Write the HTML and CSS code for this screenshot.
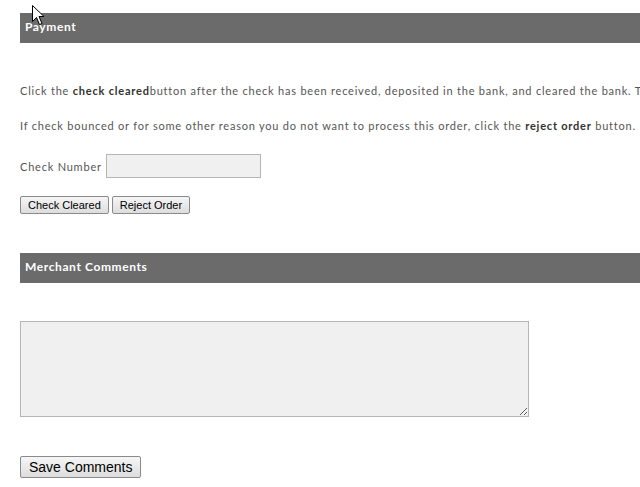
FILE: index.html
```html
<!DOCTYPE html>
<html>
<head>
<meta charset="utf-8">
<link rel="stylesheet" href="styles.css">
</head>
<body>
<div class="page">
  <section class="panel">
    <h2 class="bar">Payment</h2>
    <p class="txt first">Click the <b>check cleared</b>button after the check has been received, deposited in the bank, and cleared the bank. The order will then be processed.</p>
    <p class="txt">If check bounced or for some other reason you do not want to process this order, click the <b>reject order</b> button.</p>
    <div class="row txt">
      <label for="cn">Check Number</label>
      <input id="cn" class="field" type="text">
    </div>
    <div class="btns">
      <button class="btn">Check Cleared</button>
      <button class="btn">Reject Order</button>
    </div>
  </section>
  <section class="panel comments">
    <h2 class="bar">Merchant Comments</h2>
    <textarea class="area"></textarea>
    <div class="save-row">
      <button class="btn big">Save Comments</button>
    </div>
  </section>
</div>
<svg class="cursor" width="13" height="21" viewBox="0 0 13 21"><path d="M0.5 0.5 L0.5 16.5 L4.5 12.5 L7.5 19.5 L10 18.5 L7 11.5 L12 11.5 Z" fill="#fff" stroke="#000" stroke-width="1"/></svg>
</body>
</html>
```
FILE: styles.css
```css
html, body { margin: 0; padding: 0; background: #fff; overflow: hidden; }
body { width: 640px; height: 487px; position: relative; }
.page { padding: 13px 0 0 20px; width: 800px; }
.panel { margin: 0; }
.bar {
  margin: 0;
  height: 30px;
  line-height: 28px;
  background: #6b6b6b;
  color: #fff;
  font-family: Lato, "Open Sans", sans-serif;
  font-weight: bold;
  font-size: 12px;
  letter-spacing: 0.6px;
  padding-left: 5px;
  width: 780px;
  box-sizing: border-box;
}
.txt {
  font-family: Lato, "Open Sans", sans-serif;
  font-size: 11px;
  letter-spacing: 0.78px;
  color: #555;
  white-space: nowrap;
  margin: 0;
}
.txt b { color: #333; }
.first { margin-top: 41px; }
.txt + .txt { margin-top: 22px; }
.row { display: flex; align-items: center; margin-top: 14px; gap: 4px; }
.field {
  width: 155px; height: 24px; box-sizing: border-box;
  border: 1px solid #b5b5b5; background: #f0f0f0; margin: 0; padding: 0;
}
.btns { display: flex; gap: 3px; margin-top: 18px; }
.btn {
  font-family: Arial, "Liberation Sans", sans-serif;
  font-size: 11px;
  color: #000;
  height: 18px;
  padding: 0 7px;
  border: 1px solid #8a8a8a;
  border-radius: 2px;
  background: linear-gradient(#f6f6f6, #dddddd);
  margin: 0;
}
.comments { margin-top: 39px; }
.area {
  display: block;
  margin-top: 38px;
  width: 509px; height: 96px; box-sizing: border-box;
  border: 1px solid #b5b5b5; background: #f0f0f0; padding: 0;
}
.save-row { margin-top: 39px; }
.big { font-size: 14px; height: 22px; padding: 0 8px; }
.cursor { position: absolute; left: 32px; top: 5px; }
```
